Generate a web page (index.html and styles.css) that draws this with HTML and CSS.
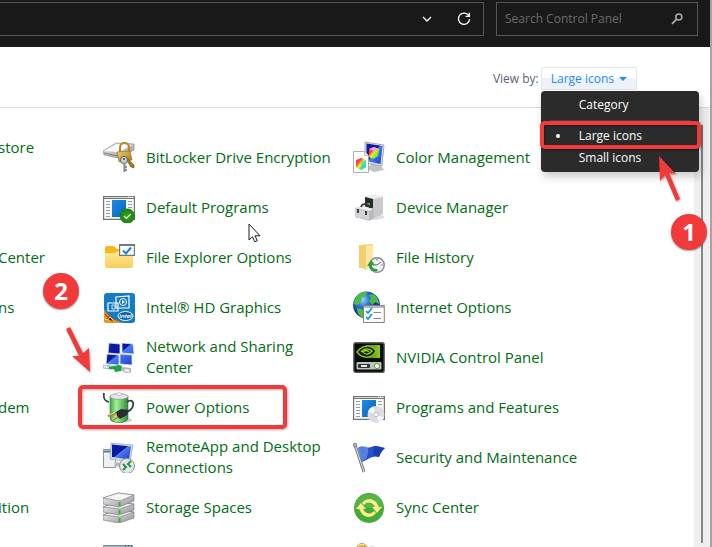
FILE: index.html
```html
<!DOCTYPE html>
<html lang="en">
<head>
<meta charset="utf-8">
<title>Control Panel</title>
<link rel="stylesheet" href="styles.css">
</head>
<body>
<svg width="0" height="0" class="defs" aria-hidden="true">
  <defs>
    <linearGradient id="blue" x2="1" y2="1"><stop stop-color="#0a1fa8"/><stop offset=".45" stop-color="#0b16a0"/><stop offset=".5" stop-color="#4c7df0"/><stop offset="1" stop-color="#1a35c8"/></linearGradient>
    <linearGradient id="app" x2="1" y2="1"><stop stop-color="#1c8be6"/><stop offset="1" stop-color="#0a62b8"/></linearGradient>
    <linearGradient id="steel" y2="1" x2="1"><stop stop-color="#f6f6f7"/><stop offset="1" stop-color="#8f9196"/></linearGradient>
    <linearGradient id="gold" x2="1" y2="1"><stop stop-color="#f0d070"/><stop offset="1" stop-color="#a87412"/></linearGradient>
    <linearGradient id="folder" x2="0" y2="1"><stop stop-color="#ffe69a"/><stop offset="1" stop-color="#f8cf5a"/></linearGradient>
    <linearGradient id="battery" x2="1"><stop stop-color="#3ea843"/><stop offset=".35" stop-color="#a5f09a"/><stop offset="1" stop-color="#2c8a34"/></linearGradient>
    <linearGradient id="rainbow" x2="1" y2="1"><stop stop-color="#ff2ad0"/><stop offset=".3" stop-color="#ff4a20"/><stop offset=".5" stop-color="#ffee20"/><stop offset=".75" stop-color="#20e860"/><stop offset="1" stop-color="#10a8ff"/></linearGradient>
    <radialGradient id="globe" cx=".35" cy=".3"><stop stop-color="#9ad8ff"/><stop offset=".5" stop-color="#2f78d8"/><stop offset="1" stop-color="#123a9c"/></radialGradient>
    <radialGradient id="ok"><stop stop-color="#3aa51c"/><stop offset="1" stop-color="#17820c"/></radialGradient>
    <linearGradient id="nv" x2="1"><stop stop-color="#3d7a00"/><stop offset="1" stop-color="#8fd010"/></linearGradient>
  </defs>
</svg>

<div class="window">
  <header class="toolbar">
    <div class="address">
      <button class="tool" aria-label="Previous locations"><svg width="10" height="6" viewBox="0 0 10 6"><path d="M1 1l4 4 4-4" fill="none" stroke="#fff" stroke-width="1.3"/></svg></button>
      <button class="tool" aria-label="Refresh"><svg width="14" height="14" viewBox="0 0 14 14"><path d="M12 4.2A5.6 5.6 0 1 0 12.6 7M12.4 .8v3.6H8.600" fill="none" stroke="#fff" stroke-width="1.3"/></svg></button>
    </div>
    <label class="search">
      <input type="search" placeholder="Search Control Panel" aria-label="Search Control Panel">
      <svg width="12" height="12" viewBox="0 0 12 12"><circle cx="7.8" cy="4" r="3" fill="none" stroke="#aaa" stroke-width="1.5"/><path d="M5.6 6.2L1 10.8" stroke="#aaa" stroke-width="1.8"/></svg>
    </label>
  </header>

  <div class="viewbar">
    <span>View by:</span>
    <div class="picker">
      <button class="picker-button" aria-haspopup="menu" aria-expanded="true">Large icons <svg width="8" height="4" viewBox="0 0 8 4"><path d="M0 0h8L4 4z" fill="#1e90ff"/></svg></button>
      <div class="menu" role="menu">
        <button role="menuitemradio" aria-checked="false">Category</button>
        <hr>
        <button role="menuitemradio" aria-checked="true">Large icons</button>
        <button role="menuitemradio" aria-checked="false">Small icons</button>
        <span class="mark mark-menu"></span>
      </div>
    </div>
  </div>

  <div class="content">
    <main class="items">
      <a class="cut first-line" href="#">store</a>
      <a class="item" href="#"><svg viewBox="0 0 32 32"><path d="M0 10L13 2l18 1v6L15 17 1 14z" fill="url(#steel)" stroke="#8c8e94" stroke-width=".7"/><path d="M1 10l13-7 15 1-13 7z" fill="#fafafa"/><path d="M1 12l14 3" stroke="#77797f"/><path d="M17 12V7c0-7 9-7 9 0v5" fill="none" stroke="#b88a22" stroke-width="2.2"/><path d="M14 11l13-1 2 9-13 2z" fill="url(#gold)" stroke="#94691a" stroke-width=".6"/><path d="M25 18l6 6v3l-3-1-4-6z" fill="#a87717" stroke="#70500e" stroke-width=".6"/><circle cx="21" cy="19" r="3.6" fill="#c9cdd2" stroke="#62666b"/><circle cx="21" cy="18" r="1.1" fill="#555"/><path d="M21.500 22v9M22 26h2M22 29h2" stroke="#898e94" stroke-width="2.200"/></svg>BitLocker Drive Encryption</a>
      <a class="item" href="#"><svg viewBox="0 0 32 32"><path d="M18 23l10 2 3 4-10 2-7-3z" fill="#bfc3c9"/><path d="M12 1l19 3-2 21-17-3z" fill="#d9dde3" stroke="#8b929b" stroke-width=".7"/><path d="M13.500 2.500l16 2.500-2 18-14-3z" fill="url(#blue)"/><path d="M16 8l5-2 5 2-1 7-5 3-4-2z" fill="url(#rainbow)"/><path d="M16 8l5-2 5 2-5 2z" fill="#ff9af0"/><path d="M20.500 10L26 8l-1 7-5 3z" fill="#9cf030" opacity=".6"/><path d="M0.500 10.500h11l4 4v17h-15z" fill="#fff" stroke="#9a9a9a" stroke-width=".8"/><path d="M11.500 10.500v4h4" fill="#eee" stroke="#aaa" stroke-width=".7"/><path d="M3 19l5-2 5 2v7l-5 3-5-3z" fill="url(#rainbow)"/><path d="M8 21l5-2v7l-5 3z" fill="#25d9e4" opacity=".6"/></svg>Color Management</a>

      <span></span>
      <a class="item" href="#"><svg viewBox="0 0 32 32"><path d="M.6 5.600h30.800v22.800H.6z" fill="#fafafa" stroke="#747474" stroke-width="1.200"/><path d="M1 7.500h30" stroke="#777"/><path d="M25 6h1M27 6h1M29 6h1" stroke="#fff"/><path d="M3 10.500h4M3 13.500h4M3 16.500h4M3 19.500h4M3 22.500h4M3 25.500h4M25 10.500h4M25 13.500h4M25 16.500h4" stroke="#999"/><path d="M9 9h14v17H9z" fill="url(#app)"/><circle cx="24.300" cy="25" r="7.500" fill="url(#ok)"/><path d="M21 25l2.400 2.400 4.400-4.400" fill="none" stroke="#fff" stroke-width="1.200"/></svg>Default Programs</a>
      <a class="item" href="#"><svg viewBox="0 0 32 32"><ellipse cx="20" cy="26" rx="11" ry="3" fill="#ddd"/><path d="M12 6l5-2 12 1 1 1v17l-8 4-10-3z" fill="#c9cacd"/><path d="M17 4l12 1 1 1-9 2-9-2z" fill="#eeeeef"/><path d="M12 6l8 2v14l-8-2z" fill="#282a2c"/><path d="M14 12h3v2h-3z" fill="#18d52c"/><path d="M2 17l8-2 11 3v9l-5 3-14-4z" fill="#b8babe"/><path d="M2 17l8-2 11 3-5 2z" fill="#ececee"/><path d="M2 18l14 3v8L2 26z" fill="#d0d2d5"/><path d="M8 16c1-4 7-4 9 1" fill="none" stroke="#343638" stroke-width="1.600"/><path d="M4 18h2v4H4zM12 20h2v4h-2z" fill="#3c3e42"/></svg>Device Manager</a>

      <a class="cut" href="#">Center</a>
      <a class="item" href="#"><svg viewBox="0 0 32 32"><path d="M2 7q0-2 2-2h7l3 3h14v8H2z" fill="#f7b817"/><path d="M2 12h10l3-2h15v15q0 2-2 2H4q-2 0-2-2z" fill="url(#folder)"/><path d="M16.600 3.600h14.800v10.800H16.600z" fill="#fff" stroke="#777" stroke-width="1.200"/><path d="M17 4.500h14" stroke="#777"/><path d="M20 9.500l3 3 5-6" fill="none" stroke="#1382e0" stroke-width="2"/></svg>File Explorer Options</a>
      <a class="item" href="#"><svg viewBox="0 0 32 32"><path d="M6 4l14-1v24H6z" fill="#f5cf68"/><path d="M13 5l7-1v22l-7 3z" fill="#ffe7a2"/><path d="M6 4l7 3v22l-7-4z" fill="#f3cd6e"/><circle cx="24" cy="24" r="7.300" fill="#eef0f2" stroke="#868a8e" stroke-width="1.400"/><path d="M24 18v1.500M24 28.500V30M30 24h-1.500M24 24l4-3M24 24h-4" stroke="#666" stroke-width="1"/><path d="M24 30c-5 1-8-2-8-5h-2l4-6 4 5h-3c0 3 2 4 5 4z" fill="#25a03b"/></svg>File History</a>

      <a class="cut" href="#">ns</a>
      <a class="item" href="#"><svg viewBox="0 0 32 32"><rect x="1" y="2" width="31" height="30" rx="3" fill="#147bc5"/><path d="M1 18c4 8 11 12 20 14H4q-3 0-3-3z" fill="#e39a22"/><path d="M2 23l3 3M4 28l3-3 3 5M10 30l2-2" stroke="#d34a20" stroke-width="1.500"/><path d="M2 28l3 1 2-3 4 4" fill="none" stroke="#efe047"/><path d="M13 6l13-1v12H13zM5 12h10v8H5z" fill="#1577bc" stroke="#fff" stroke-width="1.200"/><circle cx="20" cy="11" r="3.500" fill="none" stroke="#fff"/><path d="M19 9l3 2-3 2z" fill="#fff"/><path d="M9 14h3v4H9z" fill="none" stroke="#fff" stroke-width=".8"/><ellipse cx="22.500" cy="25" rx="7.500" ry="4.500" fill="#0a62ad" stroke="#fff"/><text x="22.500" y="27.300" text-anchor="middle" class="brand">intel</text></svg>Intel® HD Graphics</a>
      <a class="item" href="#"><svg viewBox="0 0 32 32"><circle cx="13.500" cy="14" r="13.500" fill="url(#globe)"/><path d="M3 6c3-5 8-6 11-5l-1 4-4 1-1 5-4 3-3-1c0-3 1-5 2-7zM16 4l5-1c3 3 5 6 5 10l-4-2-3 3-3-4 2-3zM4 17l5 1 3 5-2 4c-4-2-6-5-6-10z" fill="#4fba45"/><path d="M10.500 14.500h20.800v17H10.500z" fill="#fcfcfc" stroke="#808080"/><path d="M11 16h20" stroke="#888" stroke-width="1.200"/><path d="M13 20l2 2 4-5M13 26l2 2 4-5" fill="none" stroke="#1590df" stroke-width="1.700"/><path d="M20.500 21.500H28M20.500 27.500H28" stroke="#8c83a0"/></svg>Internet Options</a>

      <span></span>
      <a class="item" href="#"><svg viewBox="0 0 32 32"><g fill="url(#blue)" stroke="#d6def4" stroke-width=".8"><path d="M6 2l11 1v10L5 12zM19 2l11 1 1 10-12-1zM4 13l12 1v10L3 23zM17 13l12 1v10l-12-1z"/></g><path d="M4 26l24 3" stroke="#b8bec2" stroke-width="4"/><path d="M0 24l6 1v3l-6-1zM21 27l6 1v4l-6-1z" fill="#e8ebee" stroke="#8d9295" stroke-width=".6"/><path d="M6 26l10-2 3 1-1 5-6 1-1-3H6z" fill="#1ca440"/></svg>Network and Sharing Center</a>
      <a class="item" href="#"><svg viewBox="0 0 32 32"><rect x=".8" y="1.800" width="30.400" height="29.600" rx="2" fill="#080a08" stroke="#5f625f" stroke-width="1.400"/><path d="M13 4h14v13H13z" fill="url(#nv)"/><path d="M4 11c5-7 14-8 19-1-4 8-14 8-19 1z" fill="#10180a" stroke="#8cc915" stroke-width="1.300"/><path d="M8 11c3-4 8-4 11-1-3 4-7 4-9 1 2-2 4-2 6 0" fill="none" stroke="#9be010" stroke-width="1.300"/><rect x="3.500" y="21" width="25" height="7.500" rx="1" fill="#bfc3bf"/><rect x="5" y="23" width="12" height="4" rx="1" fill="#333"/><path d="M8 24h6v2H8z" fill="#eee"/><circle cx="24" cy="25" r="2.600" fill="#f2fff0" stroke="#52a02b"/></svg>NVIDIA Control Panel</a>

      <a class="cut" href="#">dem</a>
      <a class="item" href="#"><svg viewBox="0 0 32 32"><ellipse cx="18" cy="29" rx="11" ry="3" fill="#cfcfcf"/><path d="M7 5v22c0 6 18 6 18 0V5z" fill="url(#battery)" stroke="#2a7c30" stroke-width=".6"/><ellipse cx="16" cy="5.500" rx="9" ry="3" fill="#e2e6e6" stroke="#8c9696" stroke-width=".8"/><ellipse cx="16" cy="3" rx="3" ry="1.300" fill="#fff" stroke="#969e9e" stroke-width=".6"/><path d="M1 2c-1 6 1 8 5 9M24 11c5-4 8 1 5 6-2 3-4 4-7 4" fill="none" stroke="#3c3f4e" stroke-width="1.800"/><path d="M13 21l5-3 8 1-2 5-7 4-3-3z" fill="#292c36"/><path d="M13 22l-8 3M15 26l-6 3" stroke="#a87d2c" stroke-width="2"/><path d="M12 21.500l-6 2.500M14 25.500l-5 3" stroke="#fff2af" stroke-width=".8"/></svg>Power Options<span class="mark mark-item"></span></a>
      <a class="item" href="#"><svg viewBox="0 0 32 32"><path d="M.6 5.600h30.800v22.800H.6z" fill="#fafafa" stroke="#747474" stroke-width="1.200"/><path d="M1 7.500h30" stroke="#777"/><path d="M25 6h1M27 6h1M29 6h1" stroke="#fff"/><path d="M3 10.500h4M3 13.500h4M3 16.500h4M3 19.500h4M3 22.500h4M3 25.500h4M25 10.500h4M25 13.500h4" stroke="#999"/><path d="M9 9h14v17H9z" fill="url(#app)"/><circle cx="23" cy="23.500" r="8.500" fill="#dadde1"/><path d="M23 23.500l-8-3a8.500 8.500 0 0 1 5-5zM23 23.500l8 3a8.500 8.500 0 0 1-5 5z" fill="#f7f8fa"/><circle cx="23" cy="23.500" r="2.300" fill="#fff" stroke="#b7bbc0"/></svg>Programs and Features</a>

      <span></span>
      <a class="item" href="#"><svg viewBox="0 0 32 32"><path d="M.5 8.500h12v18H.5z" fill="#eef0f3" stroke="#8d949d"/><path d="M1 10.500h7" stroke="#5279b2" stroke-width="2"/><path d="M12 21l9 1 2 5-12-2z" fill="#b6bbc2"/><path d="M8 2l22 2-3 17-20-3z" fill="#d6dbe3" stroke="#8d96a5" stroke-width=".6"/><path d="M9 3.500l19 2-2 13-17-2.500z" fill="url(#blue)"/><circle cx="24" cy="25" r="7.500" fill="#e3e5e8" stroke="#8f9397"/><path d="M20 23l3 3-3 3M28 20l-3 3 3 3" fill="none" stroke="#24933b" stroke-width="1.900"/></svg>RemoteApp and Desktop Connections</a>
      <a class="item" href="#"><svg viewBox="0 0 32 32"><path d="M5 7c5-4 8 1 13-1s6-1 14 1c-4 3-5 7-6 9-6-2-10 2-17 5z" fill="#2451cb"/><path d="M13 5c4 1 2 9 0 13l-4 2L5 8c3-3 5-3 8-3z" fill="#7ea7f3" opacity=".55"/><path d="M22 5c-2 4-2 8-1 10l5 1c1-3 3-6 6-9z" fill="#12309b" opacity=".6"/><path d="M2 4l9 27" stroke="#63676d" stroke-width="2.800"/><path d="M2 4l9 27" stroke="#d6d9dc" stroke-width="1.200"/><circle cx="2" cy="4" r="1.900" fill="#adb1b6" stroke="#63676d" stroke-width=".6"/></svg>Security and Maintenance</a>

      <a class="cut" href="#">ition</a>
      <a class="item" href="#"><svg viewBox="0 0 32 32"><g stroke="#74777a" stroke-width=".6"><path d="M0 24l14-5 17 2v6l-15 5-16-3z" fill="url(#steel)"/><path d="M0 24l14-5 17 2-14 5z" fill="#eee"/><path d="M0 16l14-5 17 2v6l-15 5-16-3z" fill="url(#steel)"/><path d="M0 16l14-5 17 2-14 5z" fill="#eee"/><path d="M0 7l15-5 16 2v6l-15 6-16-3z" fill="url(#steel)"/><path d="M0 7l15-5 16 2-14 6z" fill="#f5f5f5"/></g><path d="M16.500 11v4M16.500 19v4M16.500 27v4" stroke="#39b32d" stroke-width="2"/></svg>Storage Spaces</a>
      <a class="item" href="#"><svg viewBox="0 0 32 32"><circle cx="16" cy="17" r="15" fill="#43ab38"/><path d="M2 17a14 14 0 0 1 28 0z" fill="#62bd50" opacity=".6"/><path d="M9 12a9 9 0 0 1 14-1l3 5h3l-5 6-5-6h3c-2-5-8-6-11-2zM23 22a9 9 0 0 1-14 1l-3-5H3l5-6 5 6h-3c2 5 8 6 11 2z" fill="#ffec86"/></svg>Sync Center</a>

      <span></span>
      <a class="item" href="#" aria-label="System"><svg viewBox="0 0 32 32"><path d="M.5 4.500h29v24H.5z" fill="#eef1f5" stroke="#7d858f"/><path d="M1 6h28" stroke="#a3b3c7" stroke-width="2"/><path d="M22 5h1M25 5h1M28 5h1" stroke="#445"/></svg></a>
      <a class="item" href="#" aria-label="User Accounts"><svg viewBox="0 0 32 32"><circle cx="9" cy="8" r="5.500" fill="url(#gold)" stroke="#8a681f" stroke-width=".6"/><path d="M5 5c2-2 6-2 8 0" stroke="#fff3c0" fill="none"/><circle cx="19" cy="9" r="4" fill="#d8dadd"/></svg></a>
    </main>
    <div class="scroll"><div class="thumb"></div></div>
  </div>

  <span class="badge badge-one">1</span>
  <span class="badge badge-two">2</span>
  <svg class="arrow arrow-one" width="24" height="46" viewBox="0 0 24 46"><path d="M1 0l17 18-7-1 11 26-4 2L7 19l-5 6z" fill="#f23a3a"/></svg>
  <svg class="arrow arrow-two" width="24" height="46" viewBox="0 0 24 46"><path d="M24 46L6 30l7 0L0 3l4-2 13 26 6-5z" fill="#f23a3a"/></svg>
  <svg class="pointer" width="13" height="20" viewBox="0 0 13 20"><path d="M1 1v16l3.500-3.200 2.300 5 2.500-1-2.300-5H12z" fill="#fff" stroke="#1c1c28"/></svg>
</div>
</body>
</html>
```
FILE: styles.css
```css
* { box-sizing: border-box; }
body {
  margin: 0;
  font: 12px/16px "Open Sans", "Noto Sans", sans-serif;
  background: #fff;
}
button, input { font: inherit; border: 0; padding: 0; background: none; }
svg { flex: none; }
.defs { position: absolute; }
.window {
  position: relative;
  display: flex;
  flex-direction: column;
  height: 100vh;
  overflow: hidden;
  border-right: 2px solid #a5a5a5;
}
.toolbar {
  display: flex;
  gap: 12px;
  height: 47px;
  padding: 2px 12px 11px 0;
  background: #191919;
}
.address {
  flex: 1;
  display: flex;
  justify-content: flex-end;
  align-items: center;
  gap: 14px;
  padding-right: 8px;
  border: 1px solid #555;
  border-left: 0;
}
.tool { display: grid; place-items: center; width: 23px; height: 24px; }
.search {
  display: flex;
  align-items: center;
  width: 202px;
  padding: 0 14px 0 8px;
  border: 1px solid #555;
}
.search input { flex: 1; min-width: 0; color: #ccc; outline: 0; }
.search input::placeholder { color: #6c6c6c; opacity: 1; }
.viewbar {
  display: flex;
  justify-content: flex-end;
  align-items: center;
  gap: 2px;
  height: 61px;
  padding: 3px 73px 0 0;
  color: #5b6275;
  border-bottom: 1px solid #d5dbe6;
}
.picker { position: relative; }
.picker-button {
  display: flex;
  align-items: center;
  gap: 5px;
  height: 23px;
  padding: 0 9px;
  color: #1e8df5;
  border: 1px solid #e1e6ee;
  border-radius: 2px;
  background: linear-gradient(#fff 50%, #edf1f9 50%);
}
.menu {
  position: absolute;
  z-index: 2;
  top: 24px;
  left: 0;
  width: 158px;
  padding: 3px 0;
  color: #fff;
  background: #2b2b2b;
  border-radius: 4px;
  box-shadow: 2px 5px 8px #0003;
}
.menu button {
  display: block;
  position: relative;
  width: 100%;
  height: 22px;
  padding-left: 38px;
  text-align: left;
  color: inherit;
}
.menu hr { height: 1px; margin: 4px 9px; border: 0; background: #444; }
.menu [aria-checked="true"]::before {
  content: "";
  position: absolute;
  left: 15px;
  top: 9px;
  width: 4px;
  height: 4px;
  border-radius: 50%;
  background: #fff;
}
.mark {
  position: absolute;
  border: 4px solid #f23a3a;
  border-radius: 5px;
  filter: drop-shadow(1px 1px 1px #0005);
}
.mark-menu { inset: 30px -2px 23px -1px; }
.content { flex: 1; display: flex; min-height: 0; }
.items {
  flex: 1;
  display: grid;
  grid-template-columns: 103px 250px 250px;
  grid-auto-rows: 50px;
  padding-top: 24px;
  font-size: 15px;
  line-height: 21px;
}
.items a { color: #006e12; text-decoration: none; }
.cut { align-self: center; margin-left: -2px; }
.first-line { padding-bottom: 20px; }
.item {
  position: relative;
  display: flex;
  align-items: center;
  gap: 11px;
  padding-right: 20px;
}
.item svg { width: 32px; height: 32px; }
.brand { font: italic bold 6px "Liberation Sans", sans-serif; fill: #fff; }
.mark-item { inset: 3px 66px 3px -25px; }
.scroll {
  width: 16px;
  padding: 17px 7px 4px;
  background: #efefef;
}
.thumb { height: 100%; background: #868686; }
.badge {
  position: absolute;
  display: grid;
  place-items: center;
  width: 36px;
  height: 36px;
  color: #fff;
  font: bold 24px/36px "Open Sans", sans-serif;
  background: #f23a3a;
  border-radius: 50%;
  box-shadow: 0 1px 2px #0006;
}
.badge-one { left: 671px; top: 214px; }
.badge-two { left: 43px; top: 273px; }
.arrow { position: absolute; z-index: 3; filter: drop-shadow(1px 1px 1px #0005); }
.arrow-one { left: 658px; top: 156px; }
.arrow-two { left: 66px; top: 326px; }
.pointer { position: absolute; left: 248px; top: 223px; }
```
